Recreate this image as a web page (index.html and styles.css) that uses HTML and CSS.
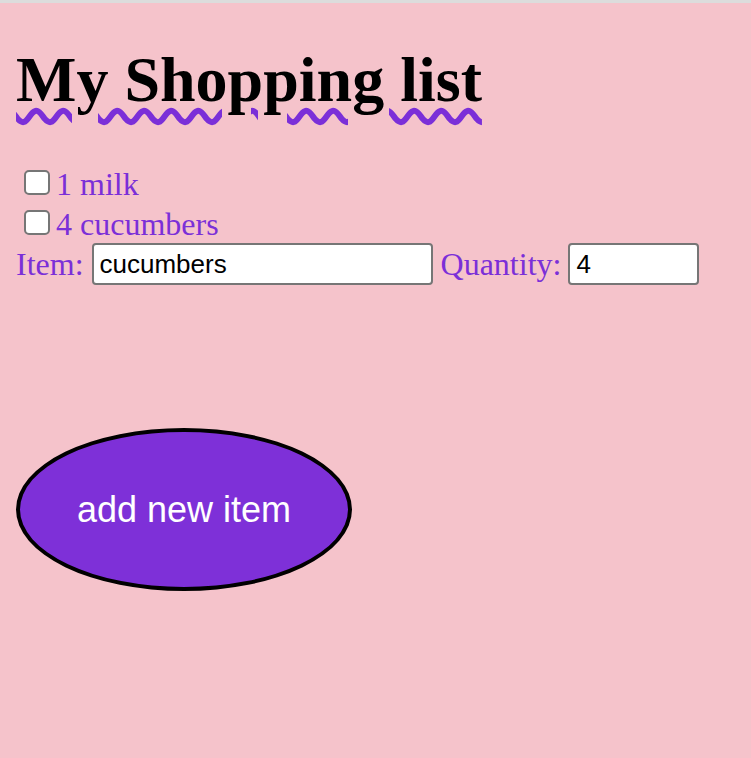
FILE: index.html
```html
<!DOCTYPE html>
<html>
<head>
<meta charset="utf-8">
<title>My Shopping list</title>
<link rel="stylesheet" href="styles.css">
</head>
<body>
<div class="topbar"></div>
<main class="page">
  <h1 class="title">My Shopping list</h1>
  <div class="list">
    <label class="row"><input type="checkbox" class="check"><span class="item-text">1 milk</span></label>
    <label class="row"><input type="checkbox" class="check"><span class="item-text">4 cucumbers</span></label>
  </div>
  <div class="form-row">
    <span class="field-label">Item:</span>
    <input type="text" class="field field-item" value="cucumbers">
    <span class="field-label">Quantity:</span>
    <input type="text" class="field field-qty" value="4">
  </div>
  <button class="add-btn">add new item</button>
</main>
</body>
</html>
```

FILE: styles.css
```css
html, body {
  margin: 0;
  padding: 0;
  background: #f5c3cb;
  height: 100%;
}
.topbar {
  height: 3px;
  background: #dcdcdc;
}
.page {
  padding: 0 16px;
  display: flex;
  flex-direction: column;
  align-items: flex-start;
}
.title {
  margin: 41px 0 0 0;
  font-family: "Liberation Serif", serif;
  font-weight: 700;
  font-size: 64px;
  line-height: 72px;
  color: #000;
  text-decoration: underline wavy #7b2fd8;
  text-decoration-thickness: 6px;
  text-underline-offset: 8px;
}
.list {
  margin-top: 46px;
  display: flex;
  flex-direction: column;
}
.row {
  display: flex;
  align-items: center;
  height: 40px;
}
.check {
  appearance: none;
  -webkit-appearance: none;
  box-sizing: border-box;
  width: 26px;
  height: 25px;
  margin: 0 6px 0 8px;
  border: 2px solid #767676;
  border-radius: 5px;
  background: #fff;
}
.item-text, .field-label {
  font-family: "Liberation Serif", serif;
  font-size: 32px;
  line-height: 36px;
  color: #7b2fd8;
}
.item-text {
  padding-top: 4px;
}
.form-row {
  display: flex;
  align-items: center;
  height: 42px;
  margin-top: 1px;
}
.field {
  box-sizing: border-box;
  height: 42px;
  border: 2px solid #767676;
  border-radius: 4px;
  background: #fff;
  padding: 0 6px;
  font-family: "Liberation Sans", Arial, sans-serif;
  font-size: 26px;
  color: #000;
  outline: none;
}
.field-item {
  width: 341px;
  margin: 0 8px 0 8px;
}
.field-qty {
  width: 131px;
  margin-left: 7px;
}
.add-btn {
  margin-top: 143px;
  box-sizing: border-box;
  width: 336px;
  height: 163px;
  border-radius: 50%;
  border: 4px solid #000;
  background: #7e30d8;
  color: #fff;
  font-family: "Liberation Sans", Arial, sans-serif;
  font-size: 36px;
  padding: 0;
}
```
